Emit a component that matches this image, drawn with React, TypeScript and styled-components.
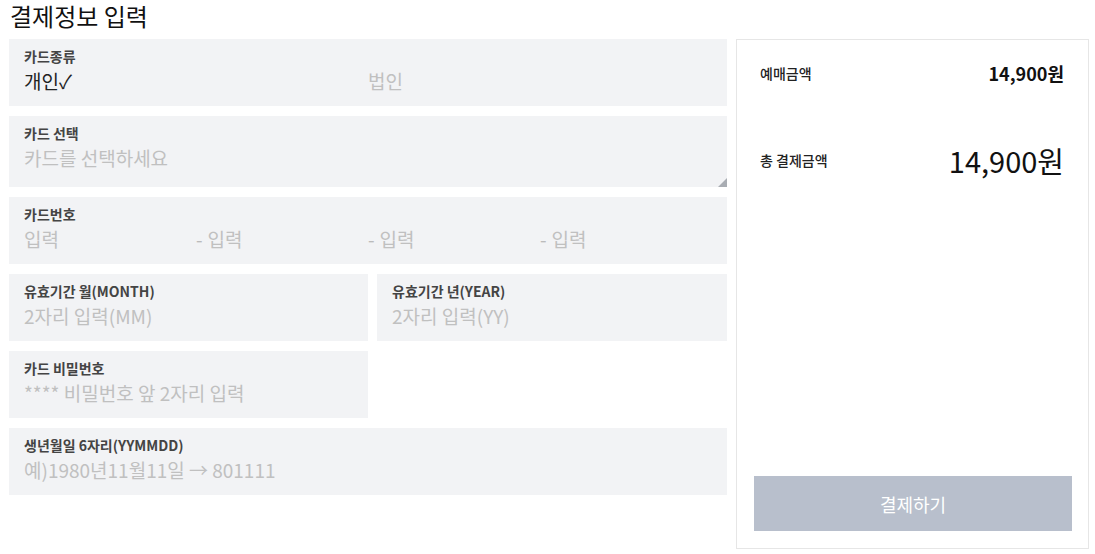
import styled, { createGlobalStyle } from "styled-components";

const GlobalStyle = createGlobalStyle`
  * { box-sizing: border-box; }
  body {
    margin: 0;
    background: #fff;
    font-family: "Noto Sans CJK KR", "Noto Sans", sans-serif;
    color: #222;
  }
`;

const Page = styled.div`
  padding: 0 7px 0 9px;
  height: 554px;
  display: flex;
  flex-direction: column;
`;

const Heading = styled.h1`
  margin: 0;
  padding: 1px 0 0 1px;
  height: 39px;
  font-size: 24px;
  font-weight: 400;
  line-height: 30px;
  color: #111;
`;

const Layout = styled.div`
  display: grid;
  grid-template-columns: 718px 353px;
  column-gap: 9px;
  align-items: start;
`;

const Form = styled.div`
  display: grid;
  grid-template-columns: 359px 1fr;
  gap: 10px 9px;
`;

const Field = styled.div<{ $half?: boolean; $tall?: boolean }>`
  grid-column: ${(p) => (p.$half ? "span 1" : "span 2")};
  position: relative;
  height: ${(p) => (p.$tall ? "71px" : "67px")};
  background: #f2f3f5;
  padding: 7px 15px 0;
`;

const Label = styled.div`
  font-size: 14px;
  font-weight: 700;
  line-height: 20px;
  color: #444;
`;

const Inputs = styled.div<{ $cols: number }>`
  display: grid;
  grid-template-columns: repeat(${(p) => p.$cols}, 1fr);
  margin-top: 1px;
`;

const Cell = styled.div`
  display: flex;
  align-items: center;
  font-size: 19px;
  line-height: 27px;
`;

const Dash = styled.span`
  color: #bbb;
  margin-right: 5px;
`;

const Input = styled.input`
  border: 0;
  outline: none;
  background: transparent;
  padding: 0;
  width: 100%;
  font: inherit;
  color: #222;
  &::placeholder { color: #c0c0c0; }
`;

const Choice = styled.span<{ $on?: boolean }>`
  color: ${(p) => (p.$on ? "#222" : "#c0c0c0")};
`;

const Grip = styled.span`
  position: absolute;
  right: 0;
  bottom: 0;
  width: 0;
  height: 0;
  border-left: 9px solid transparent;
  border-bottom: 9px solid #a9adb3;
`;

const Summary = styled.aside`
  height: 510px;
  border: 1px solid #e6e6e6;
  background: #fff;
  padding: 0 16px 17px 17px;
  display: flex;
  flex-direction: column;
`;

const Row = styled.div<{ $big?: boolean }>`
  display: flex;
  justify-content: space-between;
  align-items: center;
  padding: 0 8px 0 6px;
  margin-top: ${(p) => (p.$big ? "56px" : "20px")};
`;

const RowLabel = styled.span`
  font-size: 14px;
  font-weight: 500;
  color: #222;
`;

const Amount = styled.span<{ $big?: boolean }>`
  font-size: ${(p) => (p.$big ? "29px" : "18px")};
  font-weight: ${(p) => (p.$big ? 400 : 700)};
  color: #111;
  line-height: ${(p) => (p.$big ? "36px" : "26px")};
`;

const PayButton = styled.button`
  margin-top: auto;
  height: 55px;
  border: 0;
  background: #b8bfcc;
  color: #fff;
  font-family: inherit;
  font-size: 18px;
  cursor: pointer;
`;

export default function App() {
  return (
    <Page>
      <GlobalStyle />
      <Heading>결제정보 입력</Heading>
      <Layout>
        <Form>
          <Field>
            <Label>카드종류</Label>
            <Inputs $cols={2}>
              <Cell><Choice $on>개인✓</Choice></Cell>
              <Cell><Choice>법인</Choice></Cell>
            </Inputs>
          </Field>
          <Field $tall>
            <Label>카드 선택</Label>
            <Inputs $cols={1}>
              <Cell><Input placeholder="카드를 선택하세요" /></Cell>
            </Inputs>
            <Grip />
          </Field>
          <Field>
            <Label>카드번호</Label>
            <Inputs $cols={4}>
              {[0, 1, 2, 3].map((i) => (
                <Cell key={i}>
                  {i > 0 && <Dash>-</Dash>}
                  <Input placeholder="입력" />
                </Cell>
              ))}
            </Inputs>
          </Field>
          <Field $half>
            <Label>유효기간 월(MONTH)</Label>
            <Inputs $cols={1}>
              <Cell><Input placeholder="2자리 입력(MM)" /></Cell>
            </Inputs>
          </Field>
          <Field $half>
            <Label>유효기간 년(YEAR)</Label>
            <Inputs $cols={1}>
              <Cell><Input placeholder="2자리 입력(YY)" /></Cell>
            </Inputs>
          </Field>
          <Field $half>
            <Label>카드 비밀번호</Label>
            <Inputs $cols={1}>
              <Cell><Input placeholder="**** 비밀번호 앞 2자리 입력" /></Cell>
            </Inputs>
          </Field>
          <Field>
            <Label>생년월일 6자리(YYMMDD)</Label>
            <Inputs $cols={1}>
              <Cell><Input placeholder="예)1980년11월11일 → 801111" /></Cell>
            </Inputs>
          </Field>
        </Form>
        <Summary>
          <Row>
            <RowLabel>예매금액</RowLabel>
            <Amount>14,900원</Amount>
          </Row>
          <Row $big>
            <RowLabel>총 결제금액</RowLabel>
            <Amount $big>14,900원</Amount>
          </Row>
          <PayButton>결제하기</PayButton>
        </Summary>
      </Layout>
    </Page>
  );
}
